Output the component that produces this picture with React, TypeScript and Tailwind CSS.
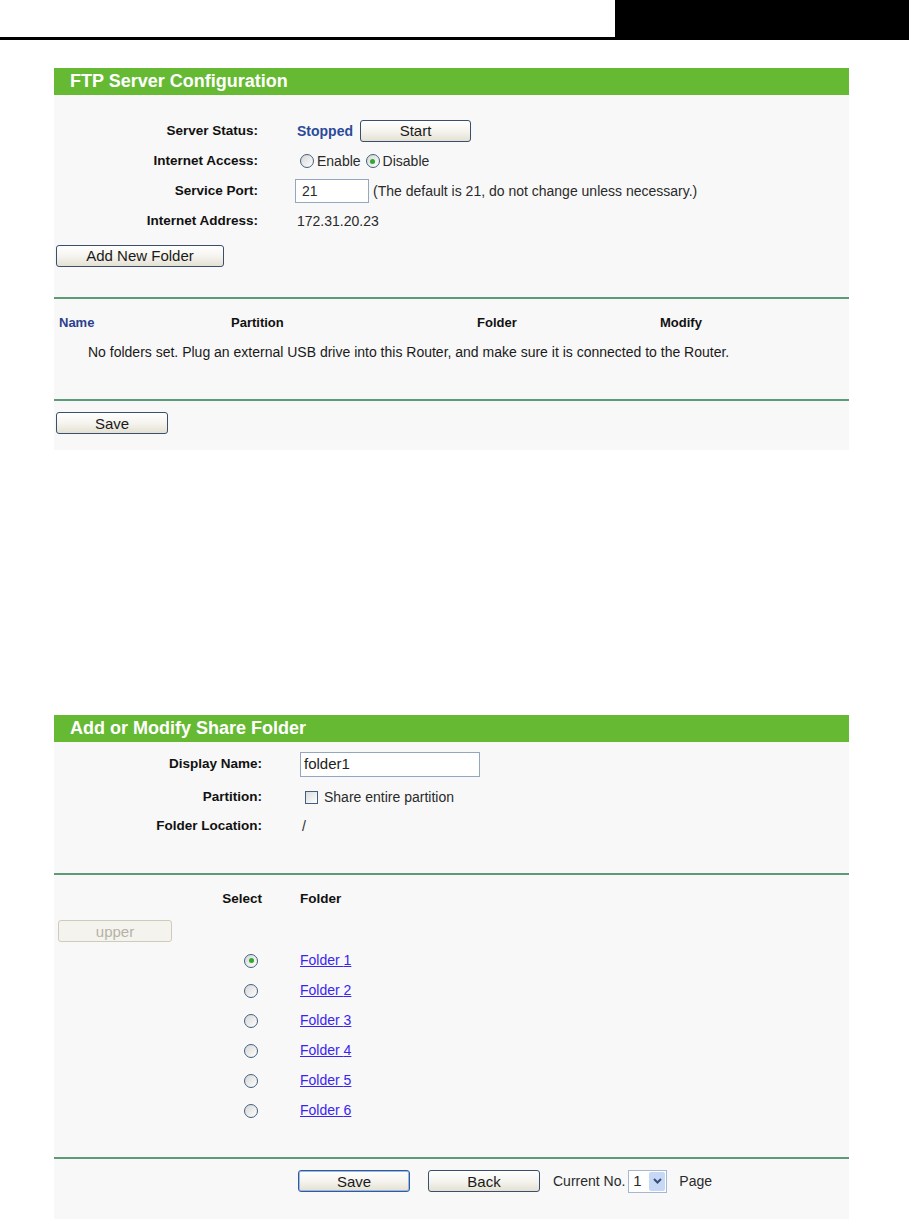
import React from 'react';

const font = { fontFamily: '"Liberation Sans", Arial, sans-serif' };

function Btn({ label, w, focused, disabled }: { label: string; w: string; focused?: boolean; disabled?: boolean }) {
  if (disabled) {
    return (
      <button
        className={`${w} h-[22px] rounded-[3px] border border-[#cfcbb8] bg-[#f4f3ee] text-[15px] leading-none text-[#b5b2a6]`}
      >
        {label}
      </button>
    );
  }
  return (
    <button
      className={`${w} h-[22px] rounded-[3px] border ${
        focused ? 'border-[#2f5c9e] shadow-[inset_0_0_0_1px_#9cb8e0]' : 'border-[#3a4f6c]'
      } bg-gradient-to-b from-white via-[#f5f4ef] to-[#e4e1d3] text-[15px] leading-none text-[#1a1a1a]`}
    >
      {label}
    </button>
  );
}

function Radio({ checked }: { checked?: boolean }) {
  return (
    <span className="inline-flex h-[14px] w-[14px] items-center justify-center rounded-full border border-[#41607f] bg-gradient-to-br from-[#d6d6d6] to-white">
      {checked && <span className="h-[5px] w-[5px] rounded-full bg-[#2ea82e]" />}
    </span>
  );
}

function Header({ title }: { title: string }) {
  return (
    <div className="h-[27px] bg-[#66b933] pl-[16px] text-[18px] font-bold leading-[27px] text-white">{title}</div>
  );
}

function Sep() {
  return <div className="h-[2px] bg-[#5b9c76]" />;
}

function Row({ label, h, lw, children }: { label: string; h: string; lw: string; children: React.ReactNode }) {
  return (
    <div className={`flex ${h} items-center`}>
      <div className={`${lw} text-right text-[13.5px] font-bold text-[#111]`}>{label}</div>
      <div className="flex items-center text-[14px] text-[#2a2a2a]">{children}</div>
    </div>
  );
}

export default function App() {
  return (
    <div className="min-h-[1219px] bg-white" style={font}>
      {/* top bar */}
      <div className="flex h-[37px]">
        <div className="flex-1" />
        <div className="w-[294px] bg-black" />
      </div>
      <div className="h-[3px] bg-black" />

      {/* FTP Server Configuration */}
      <div className="ml-[54px] mt-[28px] w-[795px]">
        <Header title="FTP Server Configuration" />
        <div className="bg-[#f8f8f8]">
          <div className="pt-[21px]">
            <Row label="Server Status:" h="h-[30px]" lw="w-[204px]">
              <span className="ml-[39px] text-[14px] font-bold text-[#2b4a9a]">Stopped</span>
              <span className="ml-[7px]">
                <Btn label="Start" w="w-[111px]" />
              </span>
            </Row>
            <Row label="Internet Access:" h="h-[30px]" lw="w-[204px]">
              <span className="ml-[42px] flex items-center gap-[3px]">
                <Radio />
                <span>Enable</span>
              </span>
              <span className="ml-[5px] flex items-center gap-[3px]">
                <Radio checked />
                <span>Disable</span>
              </span>
            </Row>
            <Row label="Service Port:" h="h-[30px]" lw="w-[204px]">
              <span className="ml-[37px] flex h-[24px] w-[74px] items-center border border-[#93a8c0] bg-white pl-[6px] text-[14px]">
                21
              </span>
              <span className="ml-[4px]">(The default is 21, do not change unless necessary.)</span>
            </Row>
            <Row label="Internet Address:" h="h-[30px]" lw="w-[204px]">
              <span className="ml-[39px]">172.31.20.23</span>
            </Row>
          </div>
          <div className="pl-[2px] pt-[8px]">
            <Btn label="Add New Folder" w="w-[168px]" />
          </div>
          <div className="h-[29px]" />
          <Sep />
          <div className="grid grid-cols-[172px_246px_183px_1fr] pl-[5px] pt-[14px] text-[13px] font-bold">
            <span className="text-[#2b3f8f]">Name</span>
            <span className="text-[#111]">Partition</span>
            <span className="text-[#111]">Folder</span>
            <span className="text-[#111]">Modify</span>
          </div>
          <div className="pl-[34px] pt-[9px] text-[14px] text-[#1a1a1a]">
            No folders set. Plug an external USB drive into this Router, and make sure it is connected to the Router.
          </div>
          <div className="h-[36px]" />
          <Sep />
          <div className="pl-[2px] pt-[11px] pb-[14px]">
            <Btn label="Save" w="w-[112px]" />
          </div>
        </div>
      </div>

      {/* Add or Modify Share Folder */}
      <div className="ml-[54px] mt-[265px] w-[795px]">
        <Header title="Add or Modify Share Folder" />
        <div className="bg-[#f8f8f8]">
          <div className="pt-[7px]">
            <Row label="Display Name:" h="h-[32px]" lw="w-[208px]">
              <span className="ml-[38px] flex h-[25px] w-[180px] items-center border border-[#93a8c0] bg-white pl-[3px] text-[15px] text-[#222]">
                folder1
              </span>
            </Row>
            <Row label="Partition:" h="h-[34px]" lw="w-[208px]">
              <span className="ml-[43px] h-[13px] w-[13px] border border-[#41607f] bg-gradient-to-br from-[#dcdcdc] to-white" />
              <span className="ml-[6px]">Share entire partition</span>
            </Row>
            <Row label="Folder Location:" h="h-[24px]" lw="w-[208px]">
              <span className="ml-[40px]">/</span>
            </Row>
          </div>
          <div className="h-[34px]" />
          <Sep />
          <div className="flex items-center pt-[14px] text-[13.5px] font-bold text-[#111]">
            <span className="w-[208px] text-right">Select</span>
            <span className="ml-[38px]">Folder</span>
          </div>
          <div className="pl-[4px] pt-[11px]">
            <Btn label="upper" w="w-[114px]" disabled />
          </div>
          <div className="pt-[2px]">
            {[1, 2, 3, 4, 5, 6].map((n) => (
              <div key={n} className="flex h-[30px] items-center">
                <span className="ml-[190px] flex">
                  <Radio checked={n === 1} />
                </span>
                <a href="#" className="ml-[42px] text-[14px] text-[#3a24f0] underline">
                  Folder {n}
                </a>
              </div>
            ))}
          </div>
          <div className="h-[31px]" />
          <Sep />
          <div className="flex items-center pt-[11px] pb-[26px] text-[14px] text-[#2a2a2a]">
            <span className="ml-[244px]">
              <Btn label="Save" w="w-[112px]" focused />
            </span>
            <span className="ml-[18px]">
              <Btn label="Back" w="w-[112px]" />
            </span>
            <span className="ml-[13px]">Current No.</span>
            <span className="ml-[3px] flex h-[23px] w-[39px] items-center border border-[#a6b8cf] bg-white">
              <span className="flex-1 pl-[4px] text-[15px]">1</span>
              <span className="mr-[1px] flex h-[19px] w-[16px] items-center justify-center rounded-[2px] bg-[#c6d8f5]">
                <svg width="9" height="6" viewBox="0 0 9 6">
                  <path d="M1 1 L4.5 4.5 L8 1" stroke="#3a4f78" strokeWidth="2" fill="none" />
                </svg>
              </span>
            </span>
            <span className="ml-[12px]">Page</span>
          </div>
        </div>
      </div>
    </div>
  );
}
